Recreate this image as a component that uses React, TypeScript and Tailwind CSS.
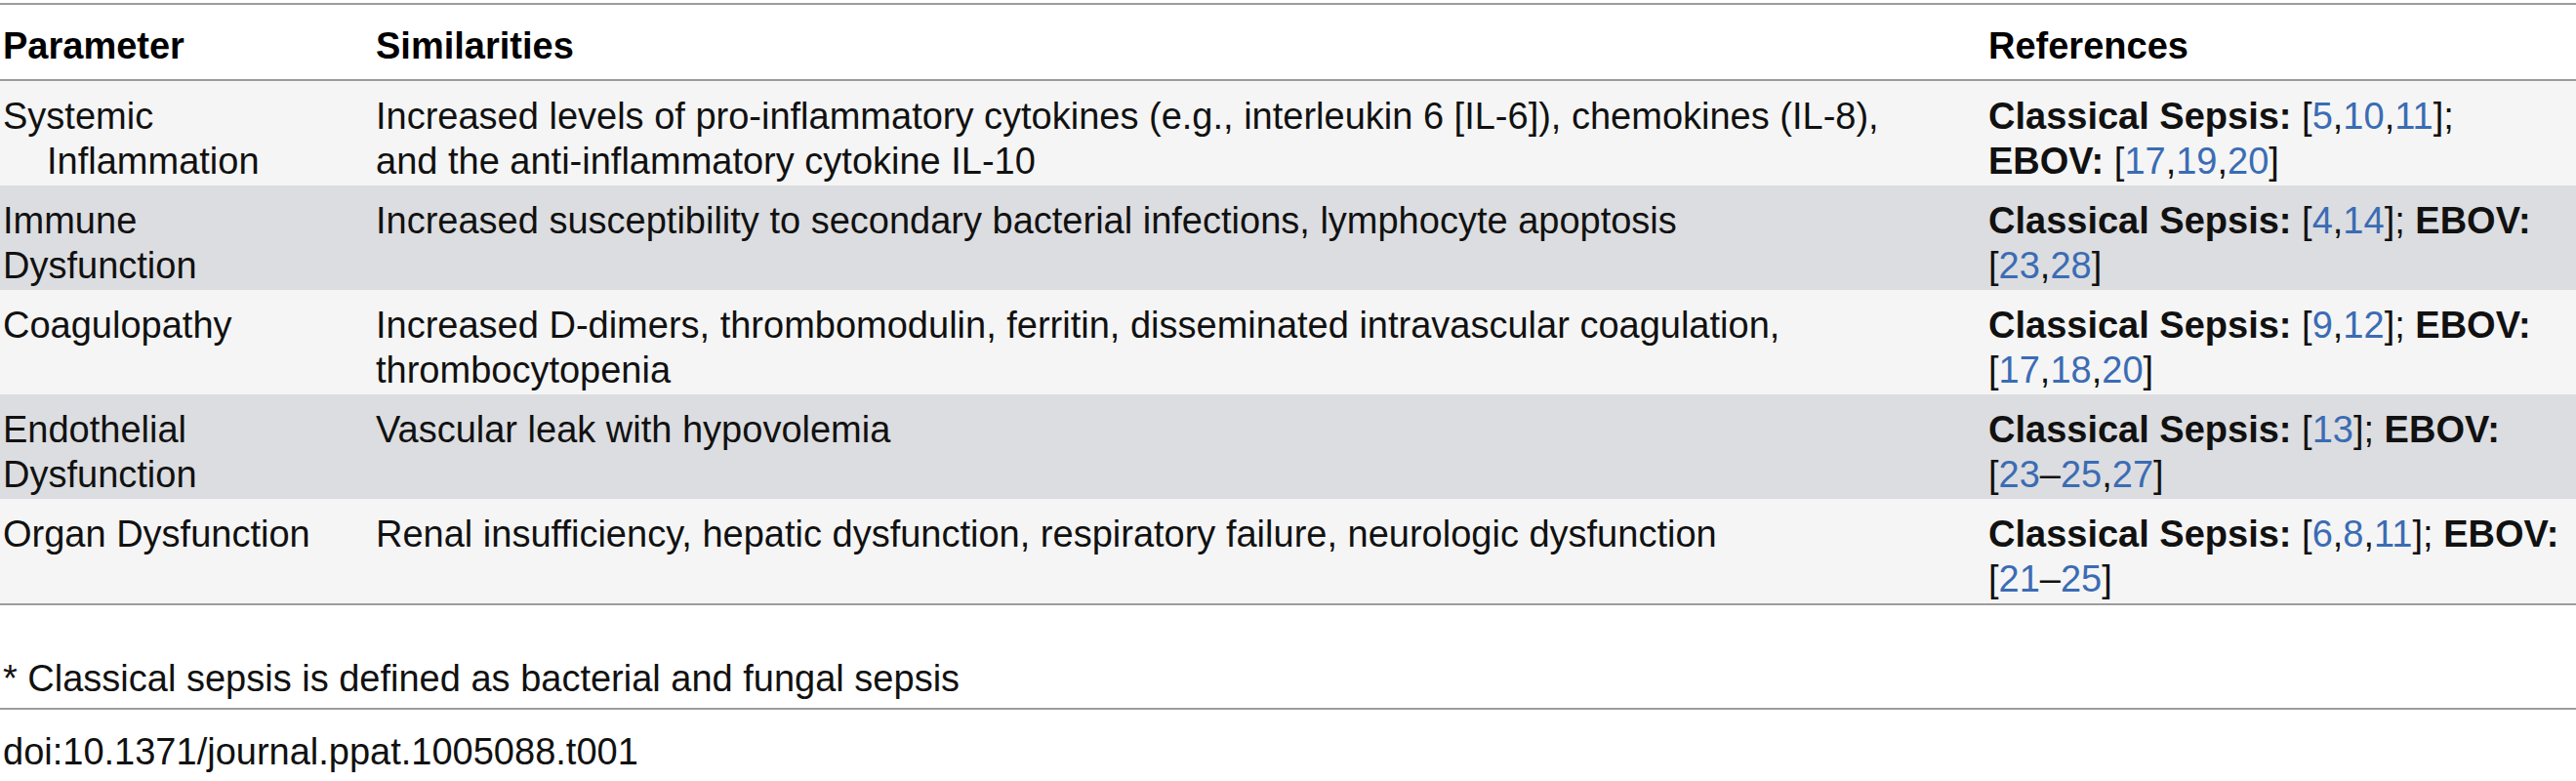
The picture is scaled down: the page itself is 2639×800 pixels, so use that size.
import React from "react";

// one citation group: [a,b,c] with blue numbers, black brackets/commas
function Cite({ items }: { items: string[] }) {
  return (
    <>
      [
      {items.map((it, i) => {
        const range = it.startsWith("–");
        return (
          <React.Fragment key={i}>
            {i > 0 && !range && ","}
            {range && "–"}
            <span className="text-[#3b6cb4]">{range ? it.slice(1) : it}</span>
          </React.Fragment>
        );
      })}
      ]
    </>
  );
}

const B = ({ children }: { children: React.ReactNode }) => <span className="font-bold">{children}</span>;

const data = [
  {
    param: ["Systemic", "Inflammation"],
    indent: true,
    sim: [
      "Increased levels of pro-inflammatory cytokines (e.g., interleukin 6 [IL-6]), chemokines (IL-8),",
      "and the anti-inflammatory cytokine IL-10",
    ],
    refs: [
      <>
        <B>Classical Sepsis:</B> <Cite items={["5", "10", "11"]} />;
      </>,
      <>
        <B>EBOV:</B> <Cite items={["17", "19", "20"]} />
      </>,
    ],
    dark: false,
  },
  {
    param: ["Immune", "Dysfunction"],
    indent: false,
    sim: ["Increased susceptibility to secondary bacterial infections, lymphocyte apoptosis"],
    refs: [
      <>
        <B>Classical Sepsis:</B> <Cite items={["4", "14"]} />; <B>EBOV:</B>
      </>,
      <Cite items={["23", "28"]} />,
    ],
    dark: true,
  },
  {
    param: ["Coagulopathy"],
    indent: false,
    sim: [
      "Increased D-dimers, thrombomodulin, ferritin, disseminated intravascular coagulation,",
      "thrombocytopenia",
    ],
    refs: [
      <>
        <B>Classical Sepsis:</B> <Cite items={["9", "12"]} />; <B>EBOV:</B>
      </>,
      <Cite items={["17", "18", "20"]} />,
    ],
    dark: false,
  },
  {
    param: ["Endothelial", "Dysfunction"],
    indent: false,
    sim: ["Vascular leak with hypovolemia"],
    refs: [
      <>
        <B>Classical Sepsis:</B> <Cite items={["13"]} />; <B>EBOV:</B>
      </>,
      <Cite items={["23", "–25", "27"]} />,
    ],
    dark: true,
  },
  {
    param: ["Organ Dysfunction"],
    indent: false,
    sim: ["Renal insufficiency, hepatic dysfunction, respiratory failure, neurologic dysfunction"],
    refs: [
      <>
        <B>Classical Sepsis:</B> <Cite items={["6", "8", "11"]} />; <B>EBOV:</B>
      </>,
      <Cite items={["21", "–25"]} />,
    ],
    dark: false,
  },
];

export default function App() {
  return (
    <div className="w-[2639px] h-[800px] overflow-hidden bg-white pt-[3px] font-['Liberation_Sans',Arial,Helvetica,sans-serif] text-[38px] leading-[46px] text-[#111] whitespace-nowrap">
      {/* table */}
      <div className="border-t-2 border-b-2 border-[#9c9c9c]">
        <div className="grid grid-cols-[382px_1652px_1fr] h-[78px] pt-[19px] font-bold text-black border-b-2 border-[#9c9c9c]">
          <div className="pl-[3px]">Parameter</div>
          <div className="pl-[3px]">Similarities</div>
          <div className="pl-[3px]">References</div>
        </div>
        {data.map((r, i) => (
          <div
            key={i}
            className={`grid grid-cols-[382px_1652px_1fr] h-[107px] pt-[13px] ${
              r.dark ? "bg-[#dcdde0]" : "bg-[#f5f5f5]"
            }`}
          >
            <div className="pl-[3px]">
              {r.param.map((p, j) => (
                <div key={j} className={j > 0 && r.indent ? "pl-[45px]" : ""}>
                  {p}
                </div>
              ))}
            </div>
            <div className="pl-[3px]">
              {r.sim.map((s, j) => (
                <div key={j}>{s}</div>
              ))}
            </div>
            <div className="pl-[3px]">
              {r.refs.map((s, j) => (
                <div key={j}>{s}</div>
              ))}
            </div>
          </div>
        ))}
      </div>

      {/* footnote */}
      <div className="mt-[52px] pl-[3px] h-[46px]">* Classical sepsis is defined as bacterial and fungal sepsis</div>
      <div className="mt-[7px] border-t-2 border-[#9c9c9c] pt-[20px] pl-[3px]">doi:10.1371/journal.ppat.1005088.t001</div>
    </div>
  );
}
